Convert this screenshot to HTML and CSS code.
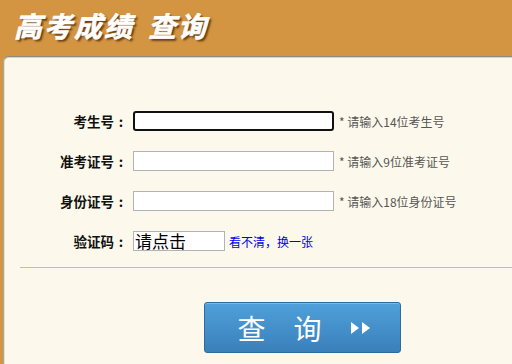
FILE: index.html
```html
<!DOCTYPE html>
<html lang="zh-CN">
<head>
    <meta charset="UTF-8">
    <title>高考成绩查询</title>
    <link rel="stylesheet" href="styles.css">
</head>
<body>
    <div class="header">
        <h1>高考成绩<span class="title-gap"></span>查询</h1>
    </div>
    <div class="panel">
        <form class="query-form">
            <div class="row">
                <label class="row-label" for="ksh">考生号<span class="colon">:</span></label>
                <input class="field field-focus" type="text" id="ksh">
                <span class="hint">* 请输入14位考生号</span>
            </div>
            <div class="row">
                <label class="row-label" for="zkzh">准考证号<span class="colon">:</span></label>
                <input class="field" type="text" id="zkzh">
                <span class="hint">* 请输入9位准考证号</span>
            </div>
            <div class="row">
                <label class="row-label" for="sfzh">身份证号<span class="colon">:</span></label>
                <input class="field" type="text" id="sfzh">
                <span class="hint">* 请输入18位身份证号</span>
            </div>
            <div class="row">
                <label class="row-label" for="yzm">验证码<span class="colon">:</span></label>
                <div class="captcha" id="yzm">请点击</div>
                <a class="refresh" href="#">看不清，换一张</a>
            </div>
        </form>
        <div class="divider"></div>
        <div class="actions">
            <button class="submit" type="button">
                <span>查</span><span>询</span>
                <svg class="arrows" width="22" height="14" viewBox="0 0 22 14">
                    <polygon points="1,1 9,7 1,13" fill="#fff"/>
                    <polygon points="12,1 20,7 12,13" fill="#fff"/>
                </svg>
            </button>
        </div>
    </div>
</body>
</html>
```

FILE: styles.css
```css
body {
    margin: 0;
    padding: 0;
    background-color: #d39542;
    font-family: "Noto Sans CJK SC", "DejaVu Sans", sans-serif;
    height: 364px;
    overflow: hidden;
}
.header {
    height: 56px;
    padding-left: 14px;
    box-sizing: border-box;
}
.header h1 {
    margin: 0;
    padding-top: 7px;
    font-size: 28px;
    line-height: 36px;
    font-weight: bold;
    font-style: italic;
    color: #fff;
    -webkit-text-stroke: 0.6px #fff;
    text-shadow: 2px 2px 2px rgba(60, 30, 0, 0.75);
    letter-spacing: 2px;
}
.title-gap {
    display: inline-block;
    width: 14px;
}
.panel {
    margin-left: 3px;
    height: 308px;
    background-color: #fcf9ec;
    border-top: 1px solid #8b8a82;
    border-left: 1px solid #a9a79c;
    border-radius: 6px 0 0 0;
    box-shadow: inset 0 1px 0 #d6d4c8, inset 1px 0 0 #e2e0d6;
}
.query-form {
    padding-top: 54px;
}
.row {
    display: flex;
    align-items: center;
    height: 20px;
    margin-bottom: 20px;
}
.row:last-child {
    margin-bottom: 0;
}
.row-label {
    width: 124px;
    text-align: right;
    font-size: 13.5px;
    font-weight: bold;
    color: #111;
    margin-right: 5px;
}
.colon {
    display: inline-block;
    width: 14px;
    text-align: center;
}
.field {
    width: 201px;
    height: 20px;
    box-sizing: border-box;
    border: 1px solid #b3b3b3;
    background: #fff;
    margin: 0;
    padding: 0 2px;
}
.field-focus {
    border: 2px solid #111;
    border-radius: 3px;
}
.hint {
    margin-left: 5px;
    font-size: 12px;
    color: #555;
}
.captcha {
    width: 92px;
    height: 20px;
    box-sizing: border-box;
    border: 1px solid #b3b3b3;
    background: #fff;
    font-size: 17px;
    line-height: 17px;
    color: #000;
    padding-left: 1px;
}
.refresh {
    margin-left: 4px;
    font-size: 12px;
    color: #0000ee;
    text-decoration: none;
}
.divider {
    margin: 16px 0 0 16px;
    border-top: 1px solid #c7c09c;
}
.actions {
    padding: 34px 0 0 200px;
}
.submit {
    width: 197px;
    height: 51px;
    border: 1px solid #2f6a9c;
    border-radius: 3px;
    background: linear-gradient(to bottom, #4fa0da, #3a80bb);
    box-shadow: inset 0 1px 0 rgba(255, 255, 255, 0.25);
    color: #fff;
    font-family: "Noto Sans CJK SC", sans-serif;
    font-size: 28px;
    display: flex;
    align-items: center;
    justify-content: center;
    gap: 28px;
    padding: 0 0 0 4px;
}
```
